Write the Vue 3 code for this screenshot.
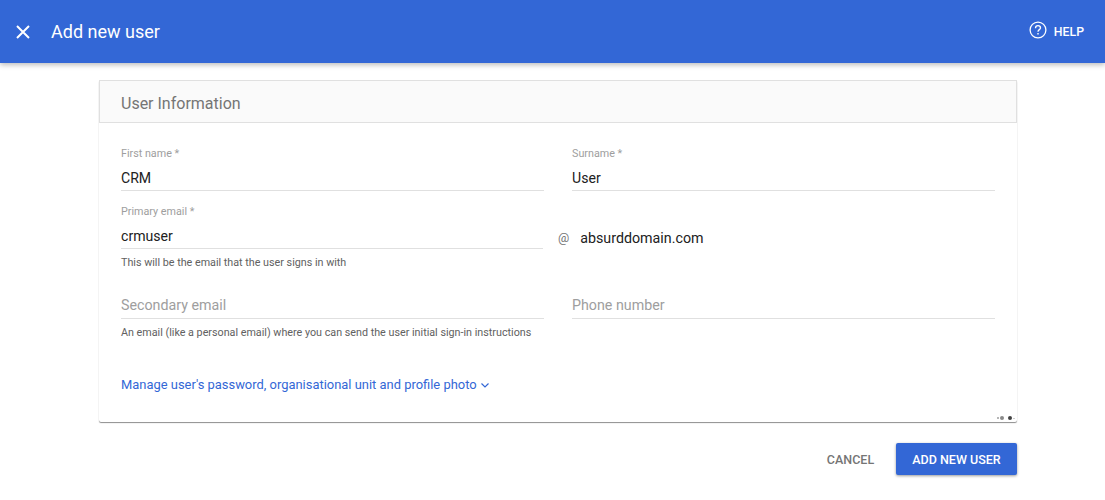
<script setup>
const rowFields = [
  { label: 'First name *', value: 'CRM' },
  { label: 'Surname *', value: 'User' },
]
</script>

<template>
  <div class="page">
    <header class="bar">
      <svg class="close" width="14" height="14" viewBox="0 0 14 14"><path d="M1 1L13 13M13 1L1 13" stroke="#fff" stroke-width="2" fill="none"/></svg>
      <div class="title">Add new user</div>
      <svg class="help-ic" width="18" height="18" viewBox="0 0 18 18">
        <circle cx="9" cy="9" r="7.9" stroke="#fff" stroke-width="1.3" fill="none"/>
        <path d="M6.5 7.2C6.5 5.7 7.6 4.7 9 4.7C10.4 4.7 11.5 5.6 11.5 6.9C11.5 8.6 9 8.7 9 10.8" stroke="#fff" stroke-width="1.3" fill="none"/>
        <rect x="8.3" y="12" width="1.4" height="1.5" fill="#fff"/>
      </svg>
      <div class="help">HELP</div>
    </header>

    <section class="card">
      <div class="card-head">User Information</div>
      <div class="card-body">
        <div class="row first">
          <div v-for="f in rowFields" :key="f.label" class="field">
            <div class="label">{{ f.label }}</div>
            <div class="value">{{ f.value }}</div>
          </div>
        </div>
        <div class="row email-row">
          <div class="field">
            <div class="label">Primary email *</div>
            <div class="value">crmuser</div>
          </div>
          <div class="domain"><span class="at">@</span><span>absurddomain.com</span></div>
        </div>
        <div class="hint">This will be the email that the user signs in with</div>
        <div class="row optional">
          <div class="field">
            <div class="placeholder">Secondary email</div>
          </div>
          <div class="field">
            <div class="placeholder">Phone number</div>
          </div>
        </div>
        <div class="hint">An email (like a personal email) where you can send the user initial sign-in instructions</div>
        <a class="manage">Manage user's password, organisational unit and profile photo
          <svg class="chev" width="10" height="7" viewBox="0 0 10 7"><path d="M1.5 1.5L5 5L8.5 1.5" stroke="#3367d6" stroke-width="1.2" fill="none"/></svg>
        </a>
        <div class="dots"><i class="d1"></i><i class="d2"></i><i class="d3"></i><i class="d4"></i></div>
      </div>
    </section>

    <footer class="actions">
      <button class="cancel">CANCEL</button>
      <button class="add">ADD NEW USER</button>
    </footer>
  </div>
</template>

<style>
html, body { margin: 0; background: #fff; }
</style>

<style scoped>
.page { width: 1105px; height: 500px; overflow: hidden; font-family: Roboto, sans-serif; background: #fff; }
.bar { height: 63px; background: #3367d6; display: flex; align-items: center; color: #fff; box-shadow: 0 2px 5px rgba(0,0,0,.26); padding: 0 21px 0 16px; box-sizing: border-box; position: relative; }
.close { margin-right: 21px; }
.title { font-size: 18px; flex: 1; }
.help-ic { margin-right: 7px; margin-bottom: 3px; }
.help { font-size: 12.3px; font-weight: 500; }
.card { margin: 17px 88px 0 99px; width: 918px; height: 342px; box-sizing: border-box; box-shadow: 0 1px 1px rgba(0,0,0,.45); border-radius: 2px; background: #fff; }
.card-head { height: 43px; box-sizing: border-box; background: #fafafa; border: 1px solid #e0e0e0; padding-left: 21px; font-size: 16px; line-height: 45px; color: #757575; }
.card-body { padding: 0 22px; position: relative; height: 299px; box-sizing: border-box; }
.row { display: flex; gap: 28px; }
.first { padding-top: 24px; }
.email-row { padding-top: 14px; }
.field { width: 423px; border-bottom: 1px solid #e0e0e0; }
.label { font-size: 10.75px; line-height: 13px; color: #9e9e9e; }
.value { font-size: 14.1px; line-height: 20px; padding: 8px 0 2px; color: #212121; }
.email-row .field { width: 422px; }
.domain { font-size: 14.25px; color: #212121; margin: 23px 0 0 -13px; line-height: 20px; }
.at { color: #757575; font-size: 12.5px; margin-right: 11px; vertical-align: 1px; }
.hint { font-size: 10.75px; line-height: 13px; margin-top: 7px; color: #616161; }
.optional { padding-top: 26px; }
.placeholder { font-size: 14.25px; line-height: 20px; padding-bottom: 3px; color: #9e9e9e; }
.manage { display: block; font-size: 12.93px; line-height: 16px; margin-top: 38px; color: #3367d6; }
.dots { position: absolute; right: 2px; bottom: 2px; display: flex; align-items: center; gap: 1px; }
.dots i { display: block; border-radius: 50%; }
.d1 { width: 2px; height: 2px; background: #9e9e9e; }
.d2 { width: 4px; height: 4px; background: #8a8a8a; margin-right: 3px; }
.d3 { width: 4px; height: 4px; background: #424242; }
.d4 { width: 2px; height: 1px; background: #bdbdbd; }
.actions { display: flex; justify-content: flex-end; margin: 21px 88px 0 0; gap: 7px; align-items: center; }
button { border: 0; font-family: inherit; font-size: 12.5px; font-weight: 500; }
.cancel { background: none; color: #757575; width: 77px; height: 32px; padding: 0; }
.add { background: #3367d6; color: #fff; width: 121px; height: 32px; padding: 0; border-radius: 2px; box-shadow: 0 1px 3px rgba(0,0,0,.4); }
</style>
